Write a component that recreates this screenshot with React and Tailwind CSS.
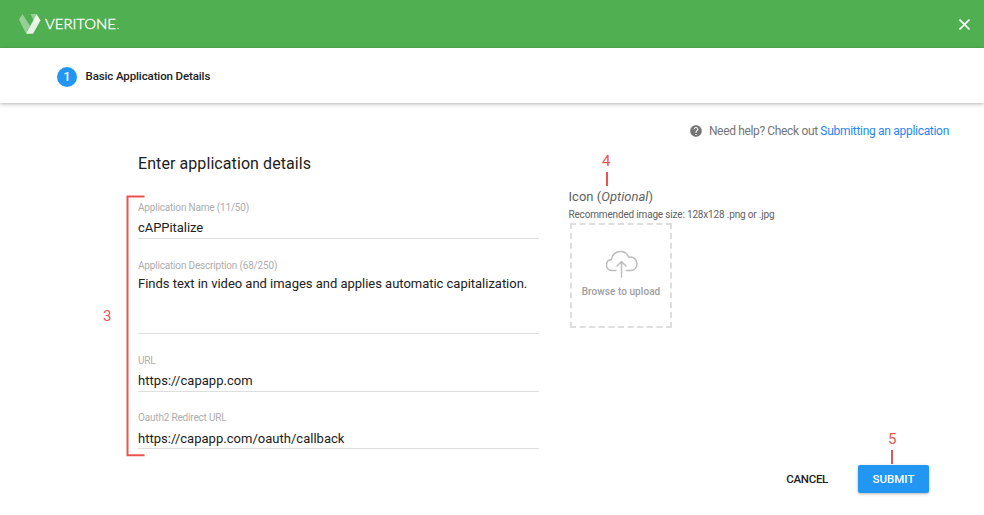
const font = "font-['Roboto',sans-serif]";

function VeritoneLogo() {
  return (
    <div className="flex items-center">
      <svg width="22" height="20" viewBox="0 0 22 20" className="shrink-0">
        <path d="M0 5.5 L3.5 0 L11 12 L7 19.5 Z" fill="#fff" fillOpacity=".4" />
        <path d="M11.500 0 L18 0 L21.500 6.500 L16 9 Z" fill="#fff" fillOpacity=".4" />
        <path d="M17.500 .5 L21.500 6.500 L14 19.700 L7 19.700 Z" fill="#fff" fillOpacity=".85" />
      </svg>
      <svg width="78" height="20" viewBox="0 0 78 20" className="ml-1 shrink-0">
        <text x="0" y="15" fontFamily="Lato, sans-serif" fontWeight="300" fontSize="13.5" fill="#fff" stroke="#fff" strokeWidth=".35" textLength="71" lengthAdjust="spacingAndGlyphs">VERITONE</text>
        <rect x="72" y="14" width="2" height="1" fill="#fff" fillOpacity=".6" />
      </svg>
    </div>
  );
}

function Field({ label, value, className, valueClass, track }) {
  return (
    <div className={`flex flex-col border-b border-[#dedede] ${className}`}>
      <label className="h-4 text-[10px] leading-4 tracking-[-0.18px] text-[#adadad]">{label}</label>
      <div className={`text-[13px] leading-4 whitespace-nowrap text-[#212121] ${valueClass} ${track}`}>{value}</div>
    </div>
  );
}

export default function App() {
  return (
    <div className={`relative flex h-[515px] w-[984px] flex-col overflow-hidden bg-white ${font}`}>
      <header className="flex h-12 shrink-0 items-center justify-between bg-[#50af51] pr-[14px] pl-[19px]">
        <VeritoneLogo />
        <svg width="11" height="11" viewBox="0 0 11 11" stroke="#fff" strokeWidth="1.6">
          <path d="M.5 .5 L10.5 10.5 M10.5 .5 L.5 10.5" />
        </svg>
      </header>

      <nav className="flex h-[55px] shrink-0 items-center pt-[3px] pl-[57px] shadow-[0_1px_4px_rgba(0,0,0,0.3)]">
        <span className="flex h-5 w-5 items-center justify-center rounded-full bg-[#2196f3] text-[13px] font-medium text-white">1</span>
        <span className="-mt-[2px] ml-[8.5px] text-[11.5px] leading-4 font-medium tracking-[-0.12px] text-[#212121]">Basic Application Details</span>
      </nav>

      <div className="mt-5 flex h-4 shrink-0 items-center justify-end pr-[35px] text-[12px]">
        <svg width="14" height="14" viewBox="0 0 24 24" fill="#757575" className="mr-[6px]">
          <path d="M12 2C6.48 2 2 6.48 2 12s4.48 10 10 10 10-4.480 10-10S17.520 2 12 2zm1 17h-2v-2h2v2zm2.070-7.750l-.9.920C13.450 12.900 13 13.500 13 15h-2v-.5c0-1.100.450-2.100 1.170-2.830l1.240-1.260c.370-.360.590-.860.590-1.410 0-1.100-.9-2-2-2s-2 .9-2 2H8c0-2.210 1.790-4 4-4s4 1.790 4 4c0 .880-.360 1.680-.930 2.250z" />
        </svg>
        <span className="tracking-[-0.35px] text-[#757575]">Need help? Check out&nbsp;</span>
        <a className="tracking-[-0.3px] text-[#1e88f5]">Submitting an application</a>
      </div>

      <main className="flex h-[310px] shrink-0 pl-[138px]">
        <section className="w-[401px]">
          <h1 className="mt-[15px] h-5 text-base leading-5 tracking-[0.08px] text-[#212121]">Enter application details</h1>
          <Field label="Application Name (11/50)" value="cAPPitalize" className="mt-[26px] h-[39px]" valueClass="mt-1" track="tracking-[-0.05px]" />
          <Field label="Application Description (68/250)" value="Finds text in video and images and applies automatic capitalization." className="mt-[19px] h-[76px]" valueClass="mt-[2px]" track="tracking-[-0.02px]" />
          <Field label="URL" value="https://capapp.com" className="mt-[19px] h-[39px]" valueClass="mt-1" track="tracking-[0.04px]" />
          <Field label="Oauth2 Redirect URL" value="https://capapp.com/oauth/callback" className="mt-[18px] h-[39px]" valueClass="mt-[5px]" track="tracking-[0.02px]" />
        </section>
        <section className="ml-[29px] pt-[50px] text-[#616161]">
          <h2 className="h-4 pl-[0.5px] text-[13px] leading-4 tracking-[0.02px]">Icon (<i>Optional</i>)</h2>
          <p className="mt-[2px] h-4 pl-[0.5px] text-[10px] leading-4 tracking-[-0.17px]">Recommended image size: 128x128 .png or .jpg</p>
          <div className="ml-[2px] flex h-[105px] w-[102px] flex-col items-center border-2 border-dashed border-[#dedede]">
            <svg width="34" height="28" viewBox="0 0 34 28" fill="none" stroke="#bdbdbd" strokeWidth="1.5" strokeLinecap="round" strokeLinejoin="round" className="mt-[25px] ml-[2px]">
              <path d="M11 20.500H7C3.500 20.500 1.500 18 1.500 15C1.500 12 3.500 9.700 6.500 9.500C7 4.500 11 1.500 15.500 1.500C20 1.500 22.500 4 23.800 7.200C28.500 6.500 32 9.500 32 13.500C32 17.500 29.500 20.500 25.500 20.500H21.500" />
              <path d="M16.500 27V12 M12 16L16.500 11.500L21 16" />
            </svg>
            <span className="mt-[6px] text-[10px] leading-4 font-medium tracking-[0.06px] text-[#9e9e9e]">Browse to upload</span>
          </div>
        </section>
      </main>

      <footer className="mt-[16px] flex shrink-0 items-center justify-end pr-[55px] text-[11.5px] font-medium">
        <button className="mr-[30px] pt-px tracking-[-0.3px] text-[#212121]">CANCEL</button>
        <button className="h-7 w-[71px] rounded-[2px] bg-[#2196f3] pt-px text-white shadow-[0_1px_3px_rgba(0,0,0,0.3)]">SUBMIT</button>
      </footer>

      <svg width="19" height="262" viewBox="0 0 19 262" fill="none" stroke="#ea5450" strokeWidth="2" className="absolute top-[195px] left-[126px]">
        <path d="M18.500 1.500H1.500V260.300H18.500" />
      </svg>
      <span className="absolute top-[306px] left-[103px] text-[15px] leading-5 text-[#ea5450]">3</span>
      <span className="absolute top-[151px] left-[602px] text-[15px] leading-5 text-[#ea5450]">4</span>
      <div className="absolute top-[172px] left-[606px] h-[14px] w-[2px] bg-[#ea5450]" />
      <span className="absolute top-[429px] left-[888px] text-[15px] leading-5 text-[#ea5450]">5</span>
      <div className="absolute top-[450px] left-[891px] h-[14px] w-[2px] bg-[#ea5450]" />
    </div>
  );
}
